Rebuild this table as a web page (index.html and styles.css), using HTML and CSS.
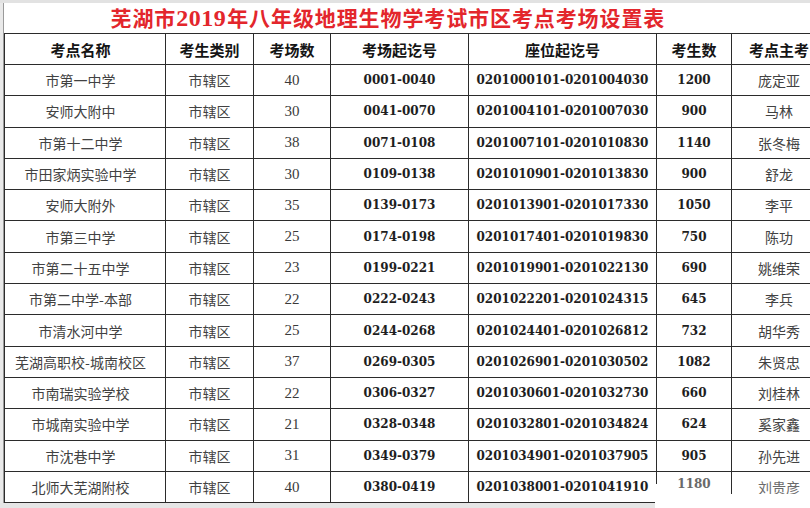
FILE: index.html
```html
<!DOCTYPE html>
<html lang="zh-CN">
<head>
<meta charset="utf-8">
<title>芜湖市2019年八年级地理生物学考试市区考点考场设置表</title>
<link rel="stylesheet" href="styles.css">
</head>
<body>
<div class="sheet">
  <div class="topstrip"></div>
  <div class="main">
    <div class="leftstrip"></div>
    <div class="tablewrap">
      <table class="grid">
        <colgroup>
          <col class="c1"><col class="c2"><col class="c3"><col class="c4"><col class="c5"><col class="c6"><col class="c7">
        </colgroup>
        <tr class="title-row"><td colspan="7" class="title"><span class="cjk">芜湖市</span><span class="tnum">2019</span><span class="cjk">年八年级地理生物学考试市区考点考场设置表</span></td></tr>
        <tr class="head">
          <th class="first">考点名称</th><th>考生类别</th><th>考场数</th><th>考场起讫号</th><th>座位起讫号</th><th>考生数</th><th>考点主考</th>
        </tr>
        <tr><td class="first">市第一中学</td><td>市辖区</td><td class="num">40</td><td class="code">0001-0040</td><td class="code">0201000101-0201004030</td><td class="code">1200</td><td>庞定亚</td></tr>
        <tr><td class="first">安师大附中</td><td>市辖区</td><td class="num">30</td><td class="code">0041-0070</td><td class="code">0201004101-0201007030</td><td class="code">900</td><td>马林</td></tr>
        <tr><td class="first">市第十二中学</td><td>市辖区</td><td class="num">38</td><td class="code">0071-0108</td><td class="code">0201007101-0201010830</td><td class="code">1140</td><td>张冬梅</td></tr>
        <tr><td class="first">市田家炳实验中学</td><td>市辖区</td><td class="num">30</td><td class="code">0109-0138</td><td class="code">0201010901-0201013830</td><td class="code">900</td><td>舒龙</td></tr>
        <tr><td class="first">安师大附外</td><td>市辖区</td><td class="num">35</td><td class="code">0139-0173</td><td class="code">0201013901-0201017330</td><td class="code">1050</td><td>李平</td></tr>
        <tr><td class="first">市第三中学</td><td>市辖区</td><td class="num">25</td><td class="code">0174-0198</td><td class="code">0201017401-0201019830</td><td class="code">750</td><td>陈功</td></tr>
        <tr><td class="first">市第二十五中学</td><td>市辖区</td><td class="num">23</td><td class="code">0199-0221</td><td class="code">0201019901-0201022130</td><td class="code">690</td><td>姚维荣</td></tr>
        <tr><td class="first">市第二中学-本部</td><td>市辖区</td><td class="num">22</td><td class="code">0222-0243</td><td class="code">0201022201-0201024315</td><td class="code">645</td><td>李兵</td></tr>
        <tr><td class="first">市清水河中学</td><td>市辖区</td><td class="num">25</td><td class="code">0244-0268</td><td class="code">0201024401-0201026812</td><td class="code">732</td><td>胡华秀</td></tr>
        <tr><td class="first">芜湖高职校-城南校区</td><td>市辖区</td><td class="num">37</td><td class="code">0269-0305</td><td class="code">0201026901-0201030502</td><td class="code">1082</td><td>朱贤忠</td></tr>
        <tr><td class="first">市南瑞实验学校</td><td>市辖区</td><td class="num">22</td><td class="code">0306-0327</td><td class="code">0201030601-0201032730</td><td class="code">660</td><td>刘桂林</td></tr>
        <tr><td class="first">市城南实验中学</td><td>市辖区</td><td class="num">21</td><td class="code">0328-0348</td><td class="code">0201032801-0201034824</td><td class="code">624</td><td>奚家鑫</td></tr>
        <tr><td class="first">市沈巷中学</td><td>市辖区</td><td class="num">31</td><td class="code">0349-0379</td><td class="code">0201034901-0201037905</td><td class="code">905</td><td>孙先进</td></tr>
        <tr class="last"><td class="first">北师大芜湖附校</td><td>市辖区</td><td class="num">40</td><td class="code">0380-0419</td><td class="code">0201038001-0201041910</td><td class="code faded">1180</td><td class="faded">刘贵彦</td></tr>
      </table>
    </div>
  </div>
  <div class="bottomstrip"></div>
  <div class="patch patch-wide"></div>
  <div class="patch patch-line"></div>
</div>
</body>
</html>
```

FILE: styles.css
```css
html, body {
  margin: 0;
  padding: 0;
  background: #ffffff;
}

body {
  width: 810px;
  height: 508px;
  overflow: hidden;
  font-family: "Noto Sans CJK SC", "Noto Sans", sans-serif;
  color: #3a3a3a;
}

.sheet {
  position: relative;
  display: flex;
  flex-direction: column;
  width: 810px;
  height: 508px;
  overflow: hidden;
}

.topstrip {
  height: 3px;
  flex: none;
  background: #e2e2e2;
}

.main {
  display: flex;
  flex: none;
}

.leftstrip {
  width: 3px;
  flex: none;
  background: #e9e9e9;
  border-right: 1px solid #9a9a9a;
}

.tablewrap {
  flex: none;
  width: 806px;
  overflow-x: clip;
  overflow-y: visible;
}

.grid {
  border-collapse: collapse;
  table-layout: fixed;
  width: 822px;
}

.c1 { width: 161px; }
.c2 { width: 88px; }
.c3 { width: 77px; }
.c4 { width: 138px; }
.c5 { width: 188px; }
.c6 { width: 75px; }
.c7 { width: 95px; }

.grid td,
.grid th {
  border: 1px solid #2b2b2b;
  padding: 0;
  text-align: center;
  vertical-align: middle;
  white-space: nowrap;
  overflow: hidden;
}

.grid tr {
  height: 31.3px;
}

.grid .title-row {
  height: 30px;
}

.grid td.title {
  border-top: none;
  border-left: none;
  border-right: none;
  text-align: left;
  padding-left: 106px;
  padding-top: 1px;
  color: #e3262c;
  font-weight: 700;
  line-height: 26px;
  overflow: visible;
}

.title .cjk {
  font-family: "Noto Sans CJK SC", sans-serif;
  font-size: 21px;
  letter-spacing: 0.9px;
}

.title .tnum {
  font-family: "Liberation Serif", serif;
  font-size: 24px;
  letter-spacing: 0.5px;
  margin-right: 1px;
}

.grid .head {
  height: 31px;
}

.grid th {
  font-family: "Noto Sans CJK SC", sans-serif;
  font-size: 15px;
  font-weight: 700;
  color: #151515;
}

.grid td {
  font-size: 14px;
  color: #424242;
}

.grid .first {
  padding-right: 9px;
}

.grid td.num {
  font-family: "Liberation Serif", serif;
  font-size: 15px;
  color: #3a3a3a;
}

.grid td.code {
  font-family: "DejaVu Serif", serif;
  font-size: 12px;
  font-weight: 700;
  color: #1e1e1e;
}

.grid .last td.faded {
  vertical-align: top;
  padding-top: 5px;
  color: #6a6a6a;
}

.bottomstrip {
  flex: 1;
  background: #e6e6e6;
}

.patch {
  position: absolute;
  background: #ffffff;
}

.patch-wide {
  left: 655px;
  top: 494px;
  width: 155px;
  height: 14px;
}

.patch-line {
  left: 654px;
  top: 484px;
  width: 4px;
  height: 10px;
}
```
